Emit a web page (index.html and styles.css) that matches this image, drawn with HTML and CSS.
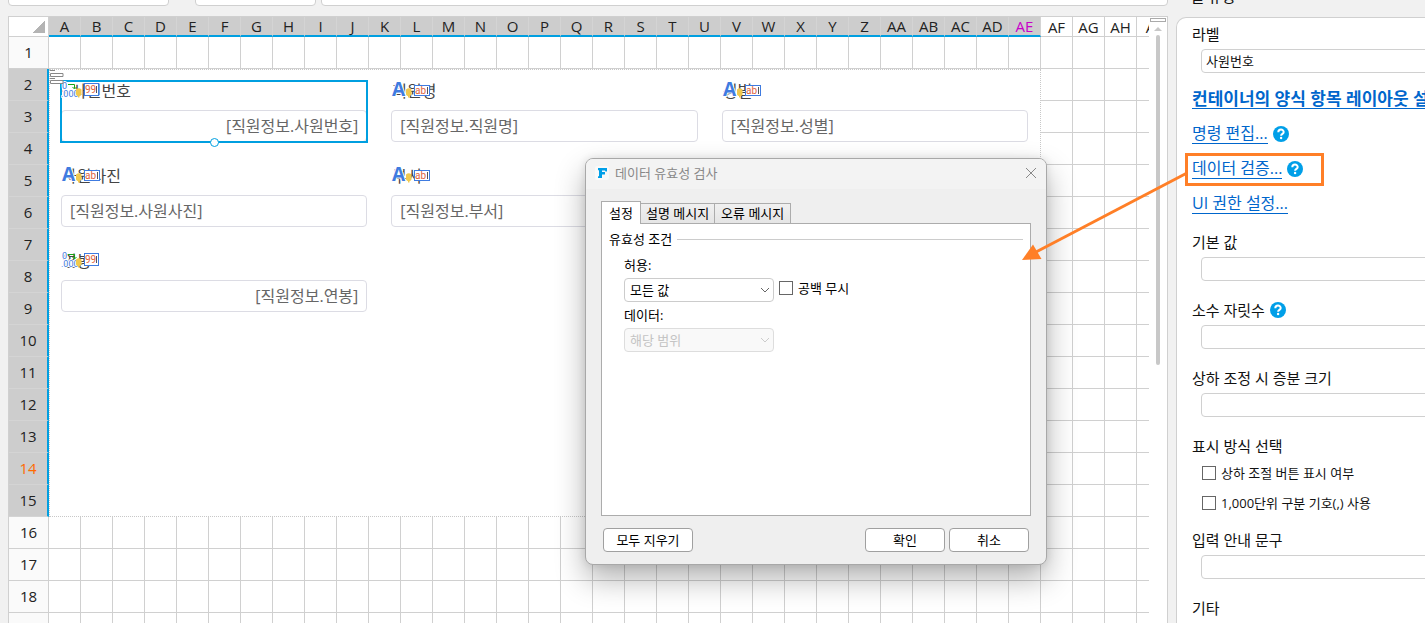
FILE: index.html
```html
<!DOCTYPE html>
<html lang="ko">
<head>
    <meta charset="UTF-8">
    <meta name="viewport" content="width=device-width, initial-scale=1.0">
    <title>데이터 유효성 검사</title>
    <link rel="stylesheet" href="styles.css">
</head>
<body>

<!-- Shared icons -->
<svg class="sprite" aria-hidden="true">
    <symbol id="icon-text" viewBox="0 0 40 18">
        <text class="glyph-a" x="1" y="15">A</text>
        <path fill="#f0c94e" d="M15 8.5q2.800-2.500 5.500 0v5q-1 1.500-2 1.500v1.500h-1.500V15q-1 0-2-1.500z"/>
        <rect x="23.500" y="4.500" width="15" height="10" fill="#fff" stroke="#3f7be0"/>
        <text class="glyph-box" x="24" y="13">ab</text>
        <path stroke="#555" d="M36.500 6v7"/>
    </symbol>
    <symbol id="icon-number" viewBox="0 0 40 18">
        <text class="glyph-digit" x="1" y="8">0</text>
        <text class="glyph-digit" x="0" y="16">.000</text>
        <path fill="none" stroke="#16a516" d="M7 3.500h6.500v4M11.500 6l2 2 2-2"/>
        <path fill="#f0c94e" d="M15 8.500q2.800-2.500 5.500 0v5q-1 1.500-2 1.500v1.500h-1.500V15q-1 0-2-1.500z"/>
        <rect x="23.500" y="2.500" width="14" height="12" fill="#fff" stroke="#3f7be0"/>
        <text class="glyph-box" x="24" y="12">99</text>
        <path stroke="#555" d="M35.500 5v7"/>
    </symbol>
    <symbol id="icon-help" viewBox="0 0 16 16">
        <circle cx="8" cy="8" r="8" fill="#009fe8"/>
        <path fill="none" stroke="#fff" stroke-width="2" d="M5.300 6.300c0-3.600 5.400-3.500 5.400-.3 0 1.900-2.600 1.800-2.600 3.800"/>
        <circle cx="8.100" cy="12" r="1.200" fill="#fff"/>
    </symbol>
</svg>

<main class="workspace">
    <div class="formula-bar">
        <input type="text" class="bar-name" aria-label="이름 상자">
        <input type="text" class="bar-func" aria-label="함수">
        <input type="text" class="bar-formula" aria-label="수식">
    </div>

    <div class="sheet">
        <div class="grid-area">
            <table class="grid" id="grid">
                <thead><tr id="columnHeads"><th class="corner"></th></tr></thead>
                <tbody id="gridRows"></tbody>
            </table>
        </div>
        <div class="scrollbar">
            <div class="split-box"></div>
            <div class="scroll-up"></div>
            <div class="scroll-thumb"></div>
        </div>
    </div>
</main>

<!-- Form container, placed over cells A2:AE15 -->
<form class="container-form" id="containerForm">
    <svg class="container-mark" viewBox="0 0 14 14" aria-hidden="true">
        <path fill="#fff" stroke="#888" d="M0 .5h5M.5 3.500h12.500v3H.5zM0 8.500h5M.5 10.500h12.500v3H.5z"/>
    </svg>
    <div class="item selected">
        <svg class="type-icon"><use href="#icon-number"/></svg>
        <label for="empNo"><span class="required">*</span>사원번호</label>
        <input type="text" id="empNo" class="number" value="[직원정보.사원번호]">
        <span class="handle"></span>
    </div>
    <div class="item">
        <svg class="type-icon"><use href="#icon-text"/></svg>
        <label for="empName">직원명</label>
        <input type="text" id="empName" value="[직원정보.직원명]">
    </div>
    <div class="item">
        <svg class="type-icon"><use href="#icon-text"/></svg>
        <label for="gender">성별</label>
        <input type="text" id="gender" value="[직원정보.성별]">
    </div>
    <div class="item">
        <svg class="type-icon"><use href="#icon-text"/></svg>
        <label for="photo">사원사진</label>
        <input type="text" id="photo" value="[직원정보.사원사진]">
    </div>
    <div class="item">
        <svg class="type-icon"><use href="#icon-text"/></svg>
        <label for="dept">부서</label>
        <input type="text" id="dept" value="[직원정보.부서]">
    </div>
    <div class="item salary">
        <svg class="type-icon"><use href="#icon-number"/></svg>
        <label for="salary">연봉</label>
        <input type="text" id="salary" class="number" value="[직원정보.연봉]">
    </div>
</form>

<aside class="side">
    <h2>셀 유형</h2>
    <div class="panel">
        <div class="field">
            <label for="labelText">라벨</label>
            <input type="text" id="labelText" value="사원번호">
        </div>
        <nav class="links">
            <div class="link-row"><a href="#" class="strong">컨테이너의 양식 항목 레이아웃 설정...</a></div>
            <div class="link-row">
                <a href="#">명령 편집...</a>
                <svg class="help"><use href="#icon-help"/></svg>
            </div>
            <div class="link-row">
                <a href="#">데이터 검증...</a>
                <svg class="help"><use href="#icon-help"/></svg>
                <span class="callout"></span>
                <svg class="callout-arrow" viewBox="0 0 166 90" aria-hidden="true">
                    <path stroke="#ff7f27" stroke-width="3" d="M165 2 14 81"/>
                    <path fill="#ff7f27" d="M0 89 11 73.500 19.500 88z"/>
                </svg>
            </div>
            <div class="link-row"><a href="#">UI 권한 설정...</a></div>
        </nav>
        <div class="field">
            <label for="defaultValue">기본 값</label>
            <input type="text" id="defaultValue">
        </div>
        <div class="field">
            <div class="label-row">
                <label for="decimals">소수 자릿수</label>
                <svg class="help"><use href="#icon-help"/></svg>
            </div>
            <input type="text" id="decimals">
        </div>
        <div class="field">
            <label for="step">상하 조정 시 증분 크기</label>
            <input type="text" id="step">
        </div>
        <fieldset class="options">
            <legend>표시 방식 선택</legend>
            <label class="check"><input type="checkbox"> 상하 조절 버튼 표시 여부</label>
            <label class="check"><input type="checkbox"> 1,000단위 구분 기호(,) 사용</label>
        </fieldset>
        <div class="field">
            <label for="placeholder">입력 안내 문구</label>
            <input type="text" id="placeholder">
        </div>
        <h3>기타</h3>
    </div>
</aside>

<section class="dialog" role="dialog" aria-labelledby="dialogTitle">
    <header class="dialog-title">
        <svg class="app-icon" viewBox="0 0 14 14" aria-hidden="true">
            <rect width="14" height="14" rx="2" fill="#fafafa"/>
            <path fill="#009fe8" d="M3 2h9v3.500h-1.500L10 4.500H7V6h3v2.500H7V12H3v-1.500l1-.5V4.500L3 4z"/>
        </svg>
        <h1 id="dialogTitle">데이터 유효성 검사</h1>
        <button type="button" class="close" aria-label="닫기">
            <svg viewBox="0 0 12 12"><path stroke="#888" d="m1 1 10 10M11 1 1 11"/></svg>
        </button>
    </header>
    <div class="tabs" role="tablist">
        <button type="button" role="tab" class="active">설정</button>
        <button type="button" role="tab">설명 메시지</button>
        <button type="button" role="tab">오류 메시지</button>
    </div>
    <div class="tab-page">
        <h2 class="group-title">유효성 조건</h2>
        <div class="condition">
            <label for="allow">허용:</label>
            <div class="condition-row">
                <div class="select">
                    <select id="allow"><option>모든 값</option></select>
                    <svg viewBox="0 0 8 8"><path d="m0 2 4 4 4-4"/></svg>
                </div>
                <label class="check"><input type="checkbox"> 공백 무시</label>
            </div>
            <label for="range">데이터:</label>
            <div class="select disabled">
                <select id="range" disabled><option>해당 범위</option></select>
                <svg viewBox="0 0 8 8"><path d="m0 2 4 4 4-4"/></svg>
            </div>
        </div>
    </div>
    <footer class="dialog-buttons">
        <button type="button" class="clear">모두 지우기</button>
        <button type="button">확인</button>
        <button type="button">취소</button>
    </footer>
</section>

<script>
    const COLUMNS = 40;
    const ROWS = 24;
    const LAST_COLUMN = 31; // AE
    const FIRST_ROW = 2;
    const LAST_ROW = 15;

    function columnName(n) {
        const letter = String.fromCharCode(65 + (n - 1) % 26);
        return n > 26 ? 'A' + letter : letter;
    }

    const heads = document.getElementById('columnHeads');
    for (let c = 1; c <= COLUMNS; c++) {
        const th = document.createElement('th');
        th.textContent = columnName(c);
        if (c <= LAST_COLUMN) th.className = 'in-range';
        if (c === LAST_COLUMN) th.classList.add('current');
        heads.appendChild(th);
    }

    const body = document.getElementById('gridRows');
    for (let r = 1; r <= ROWS; r++) {
        const row = body.insertRow();
        const th = document.createElement('th');
        const inRange = r >= FIRST_ROW && r <= LAST_ROW;
        th.textContent = r;
        if (inRange) th.className = 'in-range';
        if (r === 14) th.classList.add('current');
        row.appendChild(th);

        // The container takes the place of the cells it covers
        if (r === FIRST_ROW) {
            const cell = row.insertCell();
            cell.className = 'container-cell';
            cell.colSpan = LAST_COLUMN;
            cell.rowSpan = LAST_ROW - FIRST_ROW + 1;
            cell.appendChild(document.getElementById('containerForm'));
        }
        for (let c = inRange ? LAST_COLUMN + 1 : 1; c <= COLUMNS; c++) {
            row.insertCell();
        }
    }
</script>

</body>
</html>
```
FILE: styles.css
```css
/* General Styles */
* {
    box-sizing: border-box;
}

body {
    position: relative;
    display: flex;
    gap: 8px;
    height: 100vh;
    margin: 0;
    padding-left: 8px;
    overflow: hidden;
    background-color: #f1f1f1;
    color: #111;
    font-family: "Open Sans", "Noto Sans CJK KR", sans-serif;
    font-size: 15px;
    line-height: 20px;
}

h1, h2, h3, fieldset, legend {
    margin: 0;
    padding: 0;
    border: 0;
    font-size: 15px;
    font-weight: normal;
}

input, select, button {
    font-family: inherit;
    color: inherit;
}

.sprite {
    display: none;
}

/* Workspace */
.workspace {
    flex: 1;
    min-width: 0;
    display: flex;
    flex-direction: column;
}

.formula-bar {
    display: flex;
    flex-shrink: 0;
    height: 28px;
    margin-top: -22px;
    margin-bottom: 10px;
}

.formula-bar input {
    border: 1px solid #d0d0d0;
    border-radius: 4px;
    background: white;
}

.bar-name {
    width: 161px;
    margin-right: 26px;
}

.bar-func {
    width: 121px;
    margin-right: 5px;
}

.bar-formula {
    flex: 1;
}

.sheet {
    flex: 1;
    min-height: 0;
    display: flex;
    border: 1px solid #d0d0d0;
    border-bottom: 0;
    background: white;
}

.grid-area {
    flex: 1;
    min-width: 0;
    overflow: hidden;
}

/* Grid */
.grid {
    width: 1320px;
    table-layout: fixed;
    border-collapse: separate;
    border-spacing: 0;
}

.grid th, .grid td {
    height: 32px;
    padding: 0;
    border-right: 1px solid #d0d0d0;
    border-bottom: 1px solid #d0d0d0;
}

.grid th {
    color: #222;
    font-weight: normal;
    text-align: center;
}

.grid thead th {
    width: 32px;
    height: 20px;
    line-height: 18px;
}

.grid thead .corner {
    width: 40px;
    background: linear-gradient(135deg, transparent 50%, #b4b4b4 50%) right 3px bottom 3px / 12px 12px no-repeat;
}

.grid tbody th {
    padding-bottom: 2px;
    background-color: #fafafa;
}

.grid thead .in-range {
    background-color: #cdcdcd;
    border-right-color: #d4d4d4;
    border-bottom: 2px solid #009fe0;
}

.grid tbody .in-range {
    background-color: #cdcdcd;
    border-bottom-color: #d4d4d4;
    border-right: 2px solid #009fe0;
}

.grid thead .current {
    color: #c800c8;
}

.grid tbody .current {
    color: #ff6a00;
}

.grid .container-cell {
    border: 0;
    vertical-align: top;
}

/* Scrollbar */
.scrollbar {
    width: 18px;
    display: flex;
    flex-direction: column;
    align-items: center;
}

.split-box {
    width: 16px;
    height: 4px;
    margin-top: 1px;
    border: 1px solid #aaa;
}

.scroll-up {
    margin: 5px 0 4px;
    border: 4px solid transparent;
    border-top: 0;
    border-bottom-color: #c8c8c8;
}

.scroll-thumb {
    width: 4px;
    height: 330px;
    border-radius: 2px;
    background-color: #c8c8c8;
}

/* Form container */
.container-form {
    position: relative;
    display: grid;
    grid-template-columns: repeat(3, 1fr);
    align-content: start;
    gap: 24px;
    height: 448px;
    padding: 11px 12px 11px 11px;
    border: 1px dotted #c8c8c8;
    background: white;
}

.container-mark {
    position: absolute;
    left: 0;
    top: 0;
    width: 14px;
    height: 14px;
    z-index: 1;
}

.item {
    position: relative;
}

.item label {
    display: block;
    height: 29px;
    padding-left: 1px;
    color: #444;
    font-size: 16px;
}

.item input {
    display: block;
    width: 100%;
    height: 32px;
    padding: 0 8px 2px;
    border: 1px solid #dcdce4;
    border-radius: 4px;
    background: white;
    color: #666;
    font-size: 16px;
}

.item .number {
    text-align: right;
}

.salary {
    grid-column: 1;
}

.required {
    display: inline-block;
    width: 10px;
    color: #e00;
    font-size: 11px;
}

.type-icon {
    position: absolute;
    left: 0;
    top: 0;
    width: 40px;
    height: 18px;
}

/* White edge keeps the icon readable over the label */
.glyph-a, .glyph-digit {
    fill: #3f7be0;
    stroke: white;
    stroke-width: 2px;
    paint-order: stroke;
}

.glyph-a {
    font-size: 19px;
    font-weight: bold;
}

.glyph-box {
    fill: #e0623c;
    font-family: Roboto, sans-serif;
    font-size: 10px;
}

.glyph-digit {
    font-family: Roboto, sans-serif;
    font-size: 9px;
}

.selected {
    outline: 2px solid #009fe0;
    outline-offset: -1px;
}

.handle {
    position: absolute;
    left: 50%;
    bottom: -5px;
    width: 9px;
    height: 9px;
    margin-left: -4px;
    border: 1px solid #009fe0;
    border-radius: 50%;
    background: white;
}

/* Side panel */
.side {
    width: 249px;
    display: flex;
    flex-direction: column;
    flex-shrink: 0;
}

.side h2 {
    flex-shrink: 0;
    margin: -14px 0 11px 14px;
}

.panel {
    flex: 1;
    width: 280px;
    padding: 6px 0 0 15px;
    border: 1px solid #d0d0d0;
    border-bottom: 0;
    border-radius: 10px 0 0 0;
    background: white;
}

.field {
    margin-bottom: 19px;
}

.field label {
    display: block;
}

.field input {
    display: block;
    width: 100%;
    height: 24px;
    margin-top: 5px;
    padding: 0 4px 2px;
    border: 1px solid #d0d0d0;
    border-radius: 4px;
    background: white;
    font-size: 13px;
}

.panel .field {
    white-space: nowrap;
}

.field > input {
    width: calc(100% - 9px);
    margin-left: 9px;
}

.label-row, .link-row {
    display: flex;
    align-items: center;
    gap: 5px;
    height: 20px;
}

.links {
    display: flex;
    flex-direction: column;
    gap: 15px;
    margin: -3px 0 18px;
}

.link-row {
    position: relative;
}

.link-row a {
    border-bottom: 1px solid #0066cc;
    color: #0066cc;
    font-size: 16px;
    line-height: 19px;
    text-decoration: none;
    white-space: nowrap;
}

.link-row .strong {
    font-size: 17px;
    font-weight: bold;
}

.help {
    width: 16px;
    height: 16px;
}

.options {
    display: flex;
    flex-direction: column;
    gap: 10px;
    margin-bottom: 17px;
    padding-left: 10px;
}

.options legend {
    margin: 0 0 7px -10px;
}

.check {
    display: flex;
    align-items: center;
    gap: 5px;
    font-size: 13px;
}

.check input {
    appearance: none;
    width: 14px;
    height: 14px;
    margin: 0;
    border: 1px solid #666;
    background: white;
}

.callout {
    position: absolute;
    left: -7px;
    top: -6px;
    z-index: 3;
    width: 139px;
    height: 33px;
    border: 3px solid #ff7f27;
}

.callout-arrow {
    position: absolute;
    left: -170px;
    top: 12px;
    z-index: 3;
    width: 166px;
    height: 90px;
}

/* Dialog */
.dialog {
    position: absolute;
    left: 585px;
    top: 158px;
    z-index: 2;
    width: 462px;
    padding-bottom: 12px;
    overflow: hidden;
    border: 1px solid #a8a8a8;
    border-radius: 8px;
    background-color: #efefef;
    box-shadow: 0 14px 30px rgba(0, 0, 0, 0.3), 0 0 8px rgba(0, 0, 0, 0.1);
    color: #000;
    font-size: 13px;
}

.dialog-title {
    display: flex;
    align-items: center;
    gap: 6px;
    height: 30px;
    padding: 0 9px 2px;
    background-color: #f3f3f3;
}

.dialog-title h1 {
    flex: 1;
    color: #888;
    font-size: 13px;
}

.app-icon {
    width: 14px;
    height: 14px;
}

.close {
    display: flex;
    padding: 0;
    border: 0;
    background: none;
}

.close svg {
    width: 12px;
    height: 12px;
}

.tabs {
    display: flex;
    align-items: flex-end;
    margin: 12px 15px 0;
}

.tabs button {
    height: 20px;
    padding: 0 5px 1px;
    border: 1px solid #acacac;
    border-width: 1px 1px 0 0;
    background: linear-gradient(#f0f0f0, #e5e5e5);
    font-size: 13px;
    line-height: 18px;
}

.tabs button:last-child {
    padding: 0 6px 1px;
}

.tabs .active {
    position: relative;
    height: 23px;
    margin-bottom: -1px;
    padding: 0 7px 1px;
    border-left-width: 1px;
    background: white;
}

.tab-page {
    height: 293px;
    margin: 0 15px;
    padding: 5px 7px;
    border: 1px solid #acacac;
    background: white;
}

.group-title {
    display: flex;
    align-items: center;
    gap: 5px;
    font-size: 13px;
}

.group-title::after {
    content: "";
    flex: 1;
    height: 1px;
    background-color: #ccc;
}

.condition {
    display: flex;
    flex-direction: column;
    align-items: flex-start;
    padding: 6px 0 0 15px;
}

.condition > label {
    height: 23px;
}

.condition-row {
    display: flex;
    align-items: flex-start;
    gap: 5px;
    margin-bottom: 3px;
}

.select {
    position: relative;
    width: 150px;
}

.select select {
    appearance: none;
    display: block;
    width: 100%;
    height: 24px;
    padding: 0 5px 1px;
    border: 1px solid #ccc;
    border-radius: 4px;
    background: white;
    font-size: 13px;
}

.select svg {
    position: absolute;
    right: 5px;
    top: 8px;
    width: 8px;
    height: 8px;
    fill: none;
    stroke: #666;
}

.disabled select {
    border-color: #ddd;
    background: #f9f9f9;
    color: #c4c4c4;
    opacity: 1;
}

.disabled svg {
    stroke: #ccc;
}

.dialog-buttons {
    display: flex;
    gap: 4px;
    margin: 12px 17px 0;
}

.dialog-buttons button {
    width: 80px;
    height: 24px;
    padding: 0 0 2px;
    border: 1px solid #a0a0a0;
    border-radius: 4px;
    background: white;
    font-size: 13px;
}

.dialog-buttons .clear {
    width: 90px;
    margin-right: auto;
}
```
